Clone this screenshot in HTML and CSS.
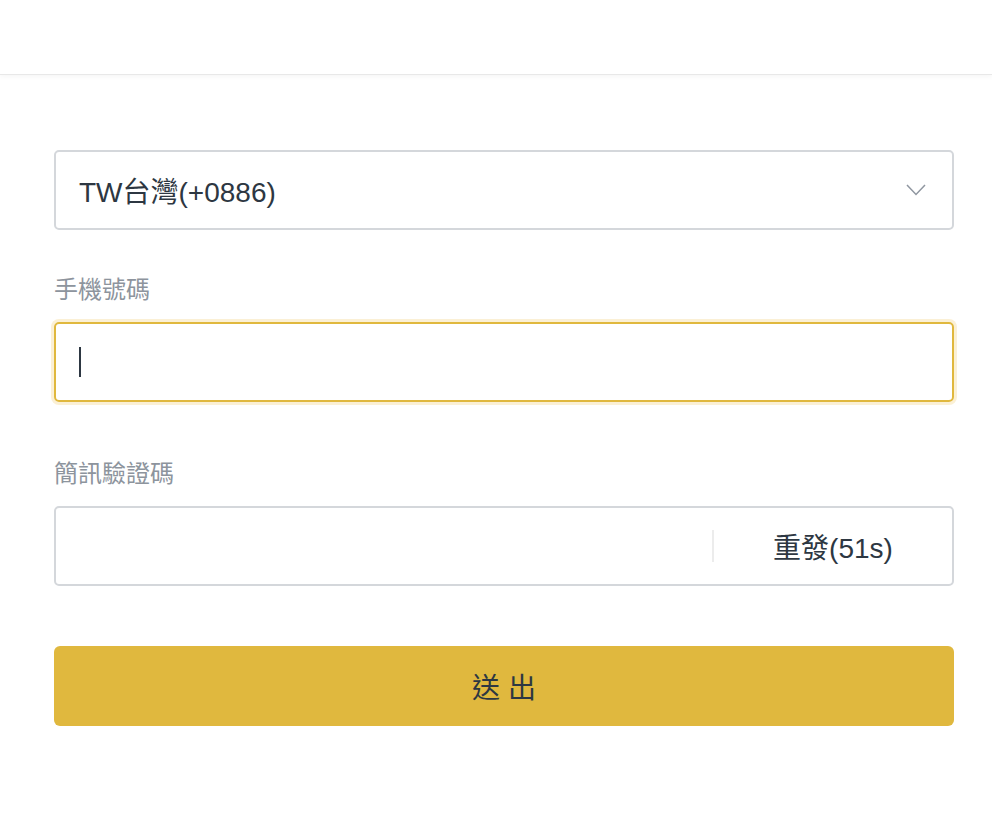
FILE: index.html
```html
<!DOCTYPE html>
<html>

<head>
  <title>手機驗證</title>
  <link rel="stylesheet" href="styles.css">
</head>

<body>
  <div class="header"></div>

  <div class="container">
    <form id="verify_form" action="/submit" method="POST">
      <div class="select-box">
        <span class="select-value">TW台灣(+0886)</span>
        <svg class="select-arrow" width="20" height="12" viewBox="0 0 20 12">
          <polyline points="1,1 10,10.5 19,1" fill="none" stroke="#8f96a0" stroke-width="1.5" />
        </svg>
      </div>

      <div class="form-group">
        <label for="phone">手機號碼</label>
        <div class="input-box focused">
          <span class="caret"></span>
          <input type="text" id="phone" name="phone">
        </div>
      </div>

      <div class="form-group code-group">
        <label for="sms_code">簡訊驗證碼</label>
        <div class="input-box">
          <input type="text" id="sms_code" name="sms_code">
          <span class="divider"></span>
          <button type="button" class="resend">重發(51s)</button>
        </div>
      </div>

      <button type="submit" class="submit-btn">送 出</button>
    </form>
  </div>
</body>

</html>
```

FILE: styles.css
```css
body {
  margin: 0;
  background: #fff;
  font-family: "Liberation Sans", "Noto Sans CJK TC", sans-serif;
  color: #2d3742;
}

.header {
  height: 74px;
  border-bottom: 1px solid #e8e8e8;
  box-shadow: 0 2px 5px rgba(0, 0, 0, 0.04);
}

.container {
  width: 900px;
  margin-left: 54px;
  padding-top: 75px;
}

.select-box {
  box-sizing: border-box;
  height: 80px;
  border: 2px solid #d4d7db;
  border-radius: 5px;
  display: flex;
  align-items: center;
  justify-content: space-between;
  padding: 0 26px 0 23px;
}

.select-value {
  font-size: 28px;
}

.select-arrow {
  display: block;
}

.form-group {
  margin-top: 44px;
}

.code-group {
  margin-top: 56px;
}

label {
  display: block;
  font-size: 24px;
  line-height: 32px;
  color: #8d949d;
  margin-bottom: 16px;
}

.input-box {
  box-sizing: border-box;
  height: 80px;
  border: 2px solid #d4d7db;
  border-radius: 5px;
  display: flex;
  align-items: center;
}

.input-box.focused {
  border-color: #e0b83e;
  box-shadow: 0 0 0 3px #fbf0d5;
  padding-left: 23px;
}

.caret {
  width: 2px;
  height: 30px;
  background: #2d3742;
}

.input-box input {
  flex: 1;
  min-width: 0;
  height: 100%;
  border: none;
  outline: none;
  background: transparent;
  font-size: 28px;
  padding: 0 0 0 22px;
  font-family: inherit;
}

.divider {
  width: 2px;
  height: 32px;
  background: #ececec;
}

.resend {
  width: 238px;
  height: 100%;
  border: none;
  background: transparent;
  font-family: inherit;
  font-size: 28px;
  color: #2d3742;
  cursor: pointer;
}

.submit-btn {
  display: block;
  width: 100%;
  height: 80px;
  margin-top: 60px;
  border: none;
  border-radius: 6px;
  background-color: #e0b83e;
  color: #2d3742;
  font-family: inherit;
  font-size: 28px;
  cursor: pointer;
}
```
